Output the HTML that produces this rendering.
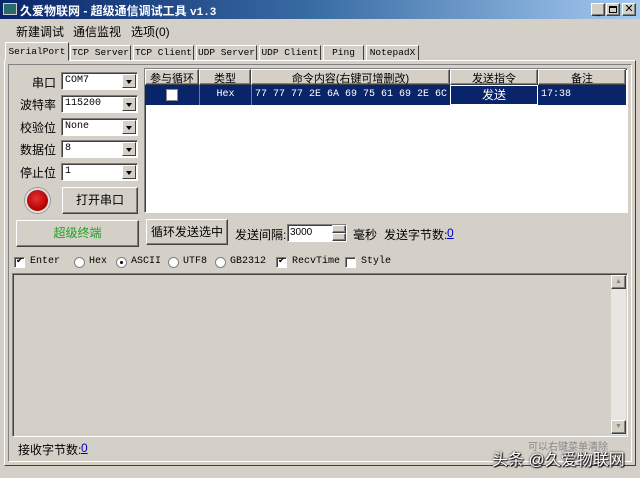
<html><head><style>
*{margin:0;padding:0;box-sizing:border-box}
body{width:640px;height:478px;background:#d4d0c8;font-family:"Liberation Sans","Noto Sans CJK SC",sans-serif;font-size:12px;position:relative;overflow:hidden;color:#000}
.a{position:absolute;white-space:nowrap}
.mono{font-family:"Liberation Mono","Noto Sans CJK SC",monospace;font-size:10px}
.raised{border:1px solid;border-color:#fff #404040 #404040 #fff;box-shadow:inset -1px -1px #808080;background:#d4d0c8}
.sunk{border:1px solid;border-color:#808080 #fff #fff #808080;box-shadow:inset 1px 1px #404040;background:#fff}
.combo{height:18px;width:77px}
.combo span{position:absolute;left:3px;top:2px;font-size:10px;font-family:"Liberation Mono",monospace}
.combo i{position:absolute;right:1px;top:1px;width:14px;height:14px;border:1px solid;border-color:#fff #404040 #404040 #fff;background:#d4d0c8}
.combo i:after{content:"";position:absolute;left:3px;top:5px;border:3.5px solid transparent;border-top:4px solid #000;border-bottom:0}
.tab{position:absolute;top:45px;height:16px;border:1px solid;border-color:#fff #404040 transparent #fff;font-family:"Liberation Mono",monospace;font-size:9.5px;text-align:center;line-height:14px;white-space:nowrap;overflow:hidden}
.lbl{position:absolute;font-size:12px;text-align:right;width:40px;left:16px}
.cb{width:11px;height:11px;border:1px solid;border-color:#808080 #fff #fff #808080;box-shadow:inset 1px 1px #404040;background:#fff;position:absolute;top:257px;overflow:hidden}
.rd{width:11px;height:11px;border-radius:50%;border:1px solid #808080;background:#fff;position:absolute;top:257px}
.opt{position:absolute;top:256px;font-family:"Liberation Mono",monospace;font-size:10px}
</style></head><body>
<div class="a" style="left:0;top:0;width:640px;height:19px;background:linear-gradient(90deg,#0a246a,#3a6ea5 50%,#a6caf0)"></div>
<div class="a" style="left:3px;top:3px;width:14px;height:12px;background:#2a6a6a;border:1px solid #ccc"></div>
<div class="a" style="left:20px;top:2px;color:#fff;font-weight:bold;font-size:12px">久爱物联网 - 超级通信调试工具 <span style="font-family:'Liberation Mono';font-size:11px">v1.3</span></div>
<div class="a raised" style="left:591px;top:3px;width:14px;height:13px;font-size:9px;text-align:center;line-height:14px">_</div>
<div class="a raised" style="left:606px;top:3px;width:14px;height:13px"><div style="margin:2px;width:8px;height:7px;border:1px solid #000;border-top-width:2px"></div></div>
<div class="a raised" style="left:622px;top:3px;width:14px;height:13px;font-size:11px;text-align:center;line-height:11px">✕</div>
<div class="a" style="left:16px;top:23px">新建调试</div>
<div class="a" style="left:73px;top:23px">通信监视</div>
<div class="a" style="left:131px;top:23px">选项(0)</div>
<div class="tab" style="left:5px;top:42px;width:64px;height:19px;line-height:18px;background:#d4d0c8;z-index:2">SerialPort</div>
<div class="tab" style="left:70px;width:61px">TCP Server</div>
<div class="tab" style="left:133px;width:61px">TCP Client</div>
<div class="tab" style="left:196px;width:61px">UDP Server</div>
<div class="tab" style="left:259px;width:62px">UDP Client</div>
<div class="tab" style="left:323px;width:41px">Ping</div>
<div class="tab" style="left:366px;width:53px">NotepadX</div>
<div class="a" style="left:4px;top:60px;width:632px;height:406px;border:1px solid;border-color:#fff #404040 #404040 #fff"></div>
<div class="a" style="left:8px;top:64px;width:624px;height:398px;border:1px solid;border-color:#808080 #fff #fff #808080"></div>
<div class="lbl" style="top:74px">串口</div><div class="a sunk combo" style="left:61px;top:72px"><span>COM7</span><i></i></div>
<div class="lbl" style="top:96px">波特率</div><div class="a sunk combo" style="left:61px;top:95px"><span>115200</span><i></i></div>
<div class="lbl" style="top:119px">校验位</div><div class="a sunk combo" style="left:61px;top:118px"><span>None</span><i></i></div>
<div class="lbl" style="top:141px">数据位</div><div class="a sunk combo" style="left:61px;top:140px"><span>8</span><i></i></div>
<div class="lbl" style="top:164px">停止位</div><div class="a sunk combo" style="left:61px;top:163px"><span>1</span><i></i></div>
<div class="a" style="left:25px;top:188px;width:25px;height:25px;border-radius:50%;background:radial-gradient(circle at 45% 40%,#e83030,#b00000 70%);border:2px solid #ddd;box-shadow:0 0 0 1px #999"></div>
<div class="a raised" style="left:62px;top:187px;width:76px;height:27px;text-align:center;line-height:25px">打开串口</div>
<div class="a sunk" style="left:144px;top:68px;width:484px;height:145px"></div>
<div class="a" style="left:145px;top:69px;width:481px;height:16px;background:#d4d0c8;font-size:11px">
<div class="a raised" style="left:0;width:54px;height:16px;text-align:center">参与循环</div>
<div class="a raised" style="left:54px;width:52px;height:16px;text-align:center">类型</div>
<div class="a raised" style="left:106px;width:199px;height:16px;text-align:center">命令内容(右键可增删改)</div>
<div class="a raised" style="left:305px;width:88px;height:16px;text-align:center">发送指令</div>
<div class="a raised" style="left:393px;width:88px;height:16px;text-align:center">备注</div></div>
<div class="a" style="left:145px;top:85px;width:481px;height:20px;background:#0a246a;color:#fff">
<div class="a" style="left:21px;top:4px;width:12px;height:12px;background:#fff;border:1px solid #888"></div>
<div class="a mono" style="left:54px;width:52px;text-align:center;border-left:1px solid #6080b0;height:20px;top:0;line-height:20px">Hex</div>
<div class="a mono" style="left:106px;top:0;line-height:20px;padding-left:3px;border-left:1px solid #6080b0;height:20px;width:199px;overflow:hidden">77 77 77 2E 6A 69 75 61 69 2E 6C ...</div>
<div class="a" style="left:305px;top:0;width:88px;height:20px;border:1px solid #fff;text-align:center;line-height:18px">发送</div>
<div class="a mono" style="left:394px;top:0;line-height:20px;padding-left:2px">17:38</div></div>
<div class="a raised" style="left:16px;top:220px;width:123px;height:27px;text-align:center;line-height:25px;color:#20a020">超级终端</div>
<div class="a raised" style="left:146px;top:219px;width:82px;height:26px;text-align:center;line-height:24px">循环发送选中</div>
<div class="a" style="left:235px;top:226px">发送间隔:</div>
<div class="a sunk" style="left:287px;top:224px;width:60px;height:18px"><span class="a" style="left:2px;top:2px;font-size:10px">3000</span>
<div class="a raised" style="left:44px;top:0;width:14px;height:8px"></div><div class="a raised" style="left:44px;top:8px;width:14px;height:8px"></div></div>
<div class="a" style="left:353px;top:226px">毫秒</div>
<div class="a" style="left:384px;top:226px">发送字节数:</div>
<div class="a" style="left:447px;top:226px;color:#0000c0;text-decoration:underline">0</div>
<div class="cb" style="left:14px"><span style="position:absolute;left:1px;top:-3px;font-size:9px">✔</span></div><div class="opt" style="left:30px">Enter</div>
<div class="rd" style="left:74px"></div><div class="opt" style="left:89px">Hex</div>
<div class="rd" style="left:116px"><div style="margin:3px;width:3px;height:3px;background:#000;border-radius:50%"></div></div><div class="opt" style="left:131px">ASCII</div>
<div class="rd" style="left:168px"></div><div class="opt" style="left:183px">UTF8</div>
<div class="rd" style="left:215px"></div><div class="opt" style="left:230px">GB2312</div>
<div class="cb" style="left:276px"><span style="position:absolute;left:1px;top:-3px;font-size:9px">✔</span></div><div class="opt" style="left:292px">RecvTime</div>
<div class="cb" style="left:345px"></div><div class="opt" style="left:361px">Style</div>
<div class="a sunk" style="left:12px;top:273px;width:616px;height:164px;background:#d4d0c8"></div>
<div class="a" style="left:611px;top:275px;width:15px;height:160px;background:#e8e6e2"></div>
<div class="a raised" style="left:611px;top:275px;width:15px;height:14px;font-size:7px;text-align:center;line-height:12px;color:#888">▲</div>
<div class="a raised" style="left:611px;top:420px;width:15px;height:14px;font-size:7px;text-align:center;line-height:12px;color:#888">▼</div>
<div class="a" style="left:18px;top:441px">接收字节数:</div>
<div class="a" style="left:81px;top:441px;color:#0000c0;text-decoration:underline">0</div>
<div class="a" style="left:528px;top:438px;font-size:10px;color:#888">可以右键菜单清除</div>
<div class="a" style="left:492px;top:446px;font-size:16px;color:#fff;text-shadow:0 0 2px #000,1px 1px 1px #000">头条 @久爱物联网</div>
</body></html>
